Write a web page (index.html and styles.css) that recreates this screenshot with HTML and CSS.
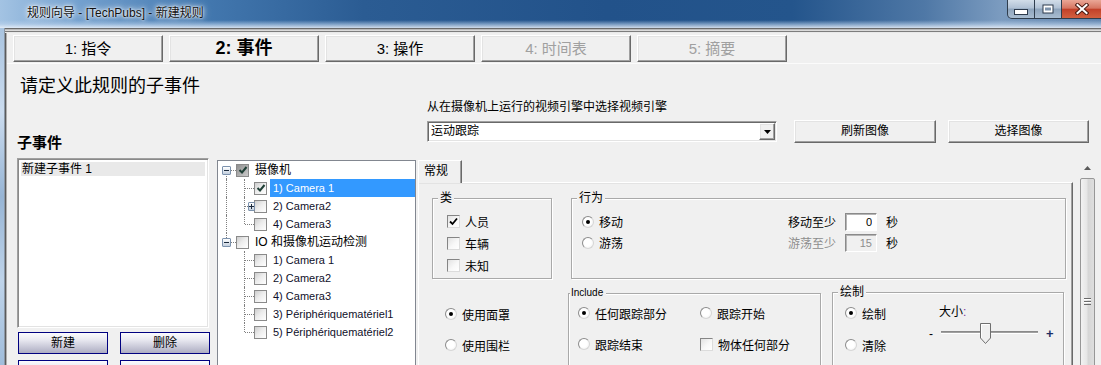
FILE: index.html
```html
<!DOCTYPE html>
<html lang="zh-CN">
<head>
<meta charset="utf-8">
<title>规则向导</title>
<link rel="stylesheet" href="styles.css">
</head>
<body>
<div class="window">
  <header class="titlebar">
    <span class="title">规则向导 - [TechPubs] - 新建规则</span>
    <div class="caption">
      <span class="cbtn cbtn-min"><svg width="14" height="6" viewBox="0 0 14 6"><rect x="0.5" y="0.5" width="13" height="5" fill="#fff" stroke="#2c3a4c"/></svg></span>
      <span class="cbtn cbtn-max"><svg width="12" height="10" viewBox="0 0 12 10"><rect x="0.5" y="0.5" width="11" height="9" fill="#2c3a4c"/><rect x="1.5" y="1.5" width="9" height="7" fill="#fff"/><rect x="3" y="3.5" width="6" height="3" fill="#7d93ac"/></svg></span>
      <span class="cbtn cbtn-close"><svg width="14" height="12" viewBox="0 0 14 12"><path d="M2.5 2 L11.5 10 M11.5 2 L2.5 10" stroke="#4a1a12" stroke-width="4" stroke-linecap="square"/><path d="M2.5 2 L11.5 10 M11.5 2 L2.5 10" stroke="#fff" stroke-width="2" stroke-linecap="square"/></svg></span>
    </div>
  </header>
  <div class="frame">
    <div class="frame-edge"></div>
    <div class="client">
      <div class="menu-edge"></div>
      <nav class="steps">
        <button class="btn3d step">1: 指令</button>
        <button class="btn3d step current">2: 事件</button>
        <button class="btn3d step">3: 操作</button>
        <button class="btn3d step" disabled>4: 时间表</button>
        <button class="btn3d step" disabled>5: 摘要</button>
      </nav>
      <main class="page">
        <h1 class="heading">请定义此规则的子事件</h1>
        <div class="cols">
          <section class="col-sub">
            <h2 class="sub-title">子事件</h2>
            <div class="listbox">
              <div class="list-item">新建子事件 1</div>
            </div>
            <div class="btn-row">
              <button class="navy-btn">新建</button>
              <button class="navy-btn wide">删除</button>
            </div>
            <div class="btn-row second">
              <button class="navy-btn"></button>
              <button class="navy-btn wide"></button>
            </div>
          </section>

          <section class="col-tree">
            <div class="tree">
              <div class="trow">
                <span class="cell v-down h"><span class="exp"></span></span>
                <span class="tcb mixed"><svg width="10" height="10" viewBox="0 0 10 10"><path d="M1.5 5 L4 7.5 L8.5 2" fill="none" stroke="#1f3f36" stroke-width="2"/></svg></span>
                <span class="tlabel cjk">摄像机</span>
              </div>
              <div class="trow">
                <span class="cell v-full"></span>
                <span class="cell v-full h"></span>
                <span class="tcb"><svg width="10" height="10" viewBox="0 0 10 10"><path d="M1.5 5 L4 7.5 L8.5 2" fill="none" stroke="#1f3f36" stroke-width="2"/></svg></span>
                <span class="tlabel sel">1) Camera 1</span>
              </div>
              <div class="trow">
                <span class="cell v-full"></span>
                <span class="cell v-full h"><span class="exp plus"></span></span>
                <span class="tcb"></span>
                <span class="tlabel">2) Camera2</span>
              </div>
              <div class="trow">
                <span class="cell v-full"></span>
                <span class="cell v-up h"></span>
                <span class="tcb"></span>
                <span class="tlabel">4) Camera3</span>
              </div>
              <div class="trow">
                <span class="cell v-up h"><span class="exp"></span></span>
                <span class="tcb"></span>
                <span class="tlabel cjk">IO 和摄像机运动检测</span>
              </div>
              <div class="trow">
                <span class="cell"></span>
                <span class="cell v-full h"></span>
                <span class="tcb"></span>
                <span class="tlabel">1) Camera 1</span>
              </div>
              <div class="trow">
                <span class="cell"></span>
                <span class="cell v-full h"></span>
                <span class="tcb"></span>
                <span class="tlabel">2) Camera2</span>
              </div>
              <div class="trow">
                <span class="cell"></span>
                <span class="cell v-full h"></span>
                <span class="tcb"></span>
                <span class="tlabel">4) Camera3</span>
              </div>
              <div class="trow">
                <span class="cell"></span>
                <span class="cell v-full h"></span>
                <span class="tcb"></span>
                <span class="tlabel">3) Périphériquematériel1</span>
              </div>
              <div class="trow">
                <span class="cell"></span>
                <span class="cell v-up h"></span>
                <span class="tcb"></span>
                <span class="tlabel">5) Périphériquematériel2</span>
              </div>
            </div>
          </section>

          <section class="col-main">
            <div class="engine-label">从在摄像机上运行的视频引擎中选择视频引擎</div>
            <div class="engine-row">
              <div class="combo">
                <span class="combo-text">运动跟踪</span>
                <span class="btn3d combo-arrow"><svg width="7" height="4" viewBox="0 0 7 4"><path d="M0 0 H7 L3.5 4 Z" fill="#000"/></svg></span>
              </div>
              <button class="btn3d act-btn refresh">刷新图像</button>
              <button class="btn3d act-btn select">选择图像</button>
            </div>

            <div class="tab-area">
              <div class="tabs">
                <div class="tabstrip"><span class="tab">常规</span></div>
                <div class="tabpanel">
                  <div class="row1">
                    <div class="group g-class">
                      <span class="gtitle">类</span>
                      <div class="opts">
                        <label class="opt"><span class="chk"><svg width="9" height="9" viewBox="0 0 9 9"><path d="M1 4.5 L3.5 7 L8 1.5" fill="none" stroke="#000" stroke-width="1.8"/></svg></span>人员</label>
                        <label class="opt"><span class="chk"></span>车辆</label>
                        <label class="opt"><span class="chk"></span>未知</label>
                      </div>
                    </div>
                    <div class="group g-behav">
                      <span class="gtitle">行为</span>
                      <div class="behav-body">
                        <div class="behav-radios">
                          <label class="opt r21"><span class="radio on"></span>移动</label>
                          <label class="opt r21"><span class="radio"></span>游荡</label>
                        </div>
                        <div class="behav-fields">
                          <div class="frow"><span class="flabel">移动至少</span><input class="num" value="0" readonly><span class="unit">秒</span></div>
                          <div class="frow"><span class="flabel dis">游荡至少</span><input class="num" value="15" disabled><span class="unit">秒</span></div>
                        </div>
                      </div>
                    </div>
                  </div>

                  <div class="row2">
                    <div class="mask-opts">
                      <label class="opt"><span class="radio on"></span>使用面罩</label>
                      <label class="opt"><span class="radio"></span>使用围栏</label>
                    </div>
                    <div class="group g-include">
                      <span class="gtitle small">Include</span>
                      <div class="inc-grid">
                        <label class="opt"><span class="radio on"></span>任何跟踪部分</label>
                        <label class="opt"><span class="radio"></span>跟踪开始</label>
                        <label class="opt"><span class="radio"></span>跟踪结束</label>
                        <label class="opt"><span class="chk"></span>物体任何部分</label>
                      </div>
                    </div>
                    <div class="group g-draw">
                      <span class="gtitle">绘制</span>
                      <div class="draw-body">
                        <div class="draw-radios">
                          <label class="opt"><span class="radio on"></span>绘制</label>
                          <label class="opt"><span class="radio"></span>清除</label>
                        </div>
                        <div class="size-box">
                          <div class="size-label">大小<span class="colon">:</span></div>
                          <div class="slider">
                            <span class="minus">-</span>
                            <span class="track">
                              <span class="track-line"></span>
                              <svg class="thumb" width="11" height="21" viewBox="0 0 11 21"><path d="M0.5 0.5 H10.5 V15 L5.5 20.5 L0.5 15 Z" fill="#f0f0f0" stroke="#6f6f6f"/><path d="M1.5 15 V1.5 H9.5" fill="none" stroke="#fff"/></svg>
                            </span>
                            <span class="plus">+</span>
                          </div>
                        </div>
                      </div>
                    </div>
                  </div>
                </div>
              </div>
              <div class="vscroll">
                <div class="up"><svg width="7" height="4" viewBox="0 0 7 4"><path d="M0 4 H7 L3.5 0 Z" fill="#5a5a5a"/></svg></div>
                <div class="thumb-bar"><span class="grip"></span></div>
              </div>
            </div>
          </section>
        </div>
      </main>
    </div>
  </div>
</div>
</body>
</html>
```

FILE: styles.css
```css
* { box-sizing: border-box; }
html, body { margin: 0; padding: 0; }
body {
  background: #f0f0f0;
  font-family: "Liberation Sans", "Noto Sans CJK SC", sans-serif;
  font-size: 12px;
  color: #000;
}
button, input { font-family: inherit; }

.window {
  width: 1101px;
  height: 365px;
  overflow: hidden;
  display: flex;
  flex-direction: column;
}

/* ---------- title bar ---------- */
.titlebar {
  height: 28px;
  flex: none;
  display: flex;
  align-items: flex-start;
  background:
    linear-gradient(to bottom, rgba(255,255,255,0) 0, rgba(255,255,255,0) 72%, rgba(190,212,236,.55) 86%, rgba(236,242,250,.85) 100%),
    linear-gradient(to right, #a3c3e3 0, #74a1cf 7%, #4479b0 18%, #2b5c93 33%, #22528a 55%, #24558c 72%, #4f78a6 84%, #7c9cc0 91%, #6286b0 100%);
}
.title {
  margin: 6px 0 0 27px;
  font-size: 12px;
  line-height: 14px;
  color: #111;
  text-shadow: 0 0 5px #fff, 0 0 9px rgba(255,255,255,.9), 0 0 2px #fff;
}
.caption { margin-left: auto; display: flex; }
.cbtn {
  height: 19px;
  display: flex;
  align-items: center;
  justify-content: center;
  border: 1px solid #2f3d4d;
  border-top: 0;
  border-left: 0;
}
.cbtn-min {
  width: 28px;
  border-left: 1px solid #2f3d4d;
  border-bottom-left-radius: 5px;
  padding-top: 6px;
  background: linear-gradient(#d2dde9, #b0c1d4 45%, #8ea4bc 50%, #a9bdd1 100%);
}
.cbtn-max {
  width: 27px;
  background: linear-gradient(#d2dde9, #b0c1d4 45%, #8ea4bc 50%, #a9bdd1 100%);
}
.cbtn-close {
  width: 39px;
  border-right: 0;
  background: linear-gradient(#eaa797, #d67662 45%, #c2412a 52%, #d2603f 100%);
}

/* ---------- frame ---------- */
.frame { flex: 1; display: flex; min-height: 0; }
.frame-edge {
  width: 4px;
  flex: none;
  background: linear-gradient(#a9c4e0, #cbdcef 25%, #97b5d5 50%, #bfd4ea 75%, #a0bddb);
}
.client {
  flex: 1;
  display: flex;
  flex-direction: column;
  border-left: 1px solid #8c98a6;
  padding-left: 2px;
  box-shadow: inset 1px 0 #5b5b5b, inset 2px 0 #b0b0b0;
}
.menu-edge {
  height: 5px;
  margin-left: -2px;
  flex: none;
  background: linear-gradient(#6b6b6b 0 1px, #b9b9b9 1px 2px, #dadada 2px 3px, #7d7d7d 3px 4px, #e9e9e9 4px 5px);
}

/* 3D classic button */
.btn3d {
  background: #f0f0f0;
  border: 1px solid;
  border-color: #fff #696969 #696969 #fff;
  box-shadow: inset -1px -1px #a0a0a0, inset 1px 1px #e3e3e3;
  padding: 0;
  color: #000;
}

/* ---------- wizard steps ---------- */
.steps {
  display: flex;
  gap: 6px;
  padding: 2px 0 0 6px;
  flex: none;
}
.step {
  width: 150px;
  height: 27px;
  font-size: 15px;
  line-height: 25px;
}
.step.current { font-size: 18px; font-weight: bold; }
.step:disabled { color: #a0a0a0; }

/* ---------- page ---------- */
.page {
  flex: 1;
  margin-top: 1px;
  border-top: 1px solid #fbfbfb;
  min-height: 0;
}
.heading {
  margin: 0;
  padding: 10px 0 0 13px;
  font-size: 18px;
  line-height: 24px;
  font-weight: normal;
}
.cols { display: flex; align-items: flex-start; }

/* left column */
.col-sub { width: 193px; margin-left: 10px; flex: none; }
.sub-title {
  margin: 36px 0 0;
  font-size: 15px;
  line-height: 18px;
  font-weight: bold;
}
.listbox {
  margin-top: 6px;
  width: 192px;
  height: 170px;
  background: #fff;
  border: 1px solid;
  border-color: #a0a0a0 #fff #fff #a0a0a0;
  box-shadow: inset 1px 1px #8a8a8a, inset -1px -1px #e3e3e3;
  padding: 3px;
}
.list-item {
  height: 14px;
  line-height: 14px;
  padding-left: 1px;
  background: #e9e9e9;
  font-size: 12px;
}
.btn-row { display: flex; gap: 12px; padding-left: 1px; margin-top: 4px; }
.btn-row.second { margin-top: 6px; }
.navy-btn {
  width: 90px;
  height: 22px;
  border: 1px solid #000080;
  background: linear-gradient(#fbfbfd, #e8e8f0 35%, #c4c4d4 75%, #acacc2);
  font-size: 12px;
  line-height: 20px;
  padding: 0;
  color: #000;
}
.navy-btn.wide { width: 90px; }

/* tree column */
.col-tree { margin: 62px 0 0 7px; flex: none; }
.tree {
  width: 199px;
  height: 220px;
  background: #fff;
  border: 1px solid #828790;
}
.trow { display: flex; align-items: center; height: 18px; }
.cell {
  width: 18px;
  height: 18px;
  flex: none;
  position: relative;
  display: flex;
  align-items: center;
  padding-left: 4px;
}
.cell::before, .cell::after { content: ""; position: absolute; }
.v-full::before { left: 8px; top: 0; bottom: 0; border-left: 1px dotted #7f7f7f; }
.v-down::before { left: 8px; top: 9px; bottom: 0; border-left: 1px dotted #7f7f7f; }
.v-up::before { left: 8px; top: 0; height: 9px; border-left: 1px dotted #7f7f7f; }
.h::after { left: 9px; right: 0; top: 9px; border-top: 1px dotted #7f7f7f; }
.exp {
  width: 9px;
  height: 9px;
  position: relative;
  z-index: 1;
  border: 1px solid #7c92ad;
  border-radius: 1px;
  background: linear-gradient(#ffffff, #e2e8f0 50%, #c3cfdd);
  display: grid;
  place-items: center;
}
.exp::before {
  content: "";
  grid-area: 1 / 1;
  width: 5px;
  height: 1px;
  background: #1b2a3c;
}
.exp.plus::after {
  content: "";
  grid-area: 1 / 1;
  width: 1px;
  height: 5px;
  background: #1b2a3c;
}
.tcb {
  width: 13px;
  height: 13px;
  flex: none;
  border: 1px solid #8a8a8a;
  background: linear-gradient(135deg, #cdcdcd, #ececec 45%, #fff);
  display: grid;
  place-items: center;
}
.tcb.mixed { background: linear-gradient(135deg, #8f8f8f, #adadad 50%, #c9c9c9); }
.tlabel {
  flex: 1;
  margin-left: 3px;
  padding-left: 3px;
  height: 18px;
  line-height: 18px;
  font-size: 11px;
  color: #10102a;
  white-space: nowrap;
}
.tlabel.cjk { font-size: 12px; color: #000; }
.tlabel.sel { background: #3399ff; color: #fff; }

/* main column */
.col-main { margin-left: 2px; width: 683px; flex: none; }
.engine-label {
  margin-top: 1px;
  padding-left: 9px;
  line-height: 16px;
  font-size: 12px;
}
.engine-row {
  display: flex;
  align-items: flex-start;
  margin-top: 5px;
  padding-left: 9px;
}
.combo {
  width: 350px;
  height: 21px;
  margin-top: 1px;
  display: flex;
  align-items: center;
  background: #fff;
  border: 1px solid;
  border-color: #a0a0a0 #fff #fff #a0a0a0;
  box-shadow: inset 1px 1px #696969, inset -1px -1px #e3e3e3;
  padding: 1px 1px 1px 2px;
}
.combo-text { flex: 1; line-height: 17px; font-size: 12px; padding-left: 1px; }
.combo-arrow {
  width: 16px;
  height: 17px;
  display: flex;
  align-items: center;
  justify-content: center;
}
.act-btn { height: 23px; font-size: 12px; line-height: 21px; }
.act-btn.refresh { width: 142px; margin-left: 17px; }
.act-btn.select { width: 141px; margin-left: 12px; }

/* tabs */
.tab-area { display: flex; margin-top: 17px; }
.tabs { width: 655px; height: 220px; display: flex; flex-direction: column; flex: none; }
.tabstrip { display: flex; height: 22px; flex: none; }
.tab {
  width: 44px;
  height: 23px;
  padding-left: 5px;
  line-height: 21px;
  font-size: 12px;
  background: #f0f0f0;
  border-top: 1px solid #fff;
  border-left: 1px solid #fff;
  border-right: 1px solid #696969;
  box-shadow: inset -1px 0 #a0a0a0;
  position: relative;
  z-index: 1;
}
.tabpanel {
  flex: 1;
  border-top: 1px solid #fff;
  border-left: 1px solid #fff;
  border-right: 1px solid #696969;
  box-shadow: inset -1px 0 #a0a0a0, inset 0 1px #e3e3e3;
}

/* group boxes */
.group {
  border: 1px solid #a9a9a9;
  box-shadow: inset 1px 1px #fff, 1px 1px #fff;
  flex: none;
}
.gtitle {
  display: block;
  width: max-content;
  margin: -8px 0 0 5px;
  padding: 0 2px;
  background: #f0f0f0;
  font-size: 12px;
  line-height: 14px;
}
.gtitle.small {
  margin: -7px 0 0 1px;
  padding: 0 3px 0 1px;
  font-size: 10px;
  line-height: 12px;
}

.opt {
  display: flex;
  align-items: center;
  gap: 5px;
  height: 22px;
  font-size: 12px;
  white-space: nowrap;
}
.opt.r21 { height: 21px; }

.chk {
  width: 13px;
  height: 13px;
  flex: none;
  border: 1px solid;
  border-color: #858585 #dcdcdc #dcdcdc #858585;
  background: linear-gradient(135deg, #e2e2e2, #f8f8f8 55%, #fff);
  display: grid;
  place-items: center;
}
.radio {
  width: 12px;
  height: 12px;
  flex: none;
  border-radius: 50%;
  border: 1px solid;
  border-color: #8c8c8c #d6d6d6 #d6d6d6 #8c8c8c;
  background: radial-gradient(circle at 45% 45%, #fff 0 45%, #ededed 90%);
  display: grid;
  place-items: center;
}
.radio.on::after {
  content: "";
  width: 4px;
  height: 4px;
  border-radius: 50%;
  background: #000;
}

.row1 { display: flex; gap: 19px; margin: 15px 0 0 13px; }
.g-class { width: 120px; height: 81px; }
.g-class .opts { padding: 5px 0 0 14px; }
.g-behav { width: 495px; height: 81px; }
.behav-body { display: flex; padding: 6px 0 0 10px; }
.behav-radios { width: 206px; }
.frow { display: flex; align-items: center; height: 21px; }
.flabel { width: 48px; font-size: 12px; }
.flabel.dis { color: #8d8d8d; }
.num {
  width: 32px;
  height: 18px;
  margin-left: 9px;
  padding: 0 4px 0 0;
  text-align: right;
  font-size: 11px;
  color: #000;
  background: #fff;
  border: 1px solid;
  border-color: #8a8a8a #fff #fff #8a8a8a;
  box-shadow: inset 1px 1px #b5b5b5;
  outline: none;
}
.num:disabled { background: #f0f0f0; color: #8d8d8d; }
.unit { margin-left: 9px; font-size: 12px; }

.row2 { display: flex; align-items: flex-start; margin: 13px 0 0 13px; }
.mask-opts {
  width: 136px;
  flex: none;
  display: flex;
  flex-direction: column;
  gap: 9px;
  padding: 11px 0 0 13px;
}
.g-include { width: 253px; height: 100px; margin-top: 1px; }
.inc-grid {
  display: grid;
  grid-template-columns: 122px auto;
  row-gap: 9px;
  padding: 3px 0 0 9px;
}
.g-draw { width: 232px; height: 100px; margin-left: 11px; }
.draw-body { display: flex; padding: 3px 0 0 12px; }
.draw-radios { width: 83px; display: flex; flex-direction: column; gap: 10px; }
.size-box { display: flex; flex-direction: column; }
.size-label { margin: 3px 0 0 11px; line-height: 14px; font-size: 12px; }
.colon { color: #7a3a9a; }
.slider { display: flex; align-items: center; height: 21px; margin-top: 4px; }
.minus { width: 6px; margin-left: 1px; font-size: 12px; line-height: 12px; }
.track { position: relative; width: 97px; height: 21px; margin-left: 6px; }
.track-line {
  display: block;
  margin-top: 8px;
  height: 3px;
  background: #a0a0a0;
  border-bottom: 1px solid #fff;
  border-top: 1px solid #8a8a8a;
}
.thumb { position: absolute; left: 39px; top: 0; }
.plus { margin-left: 8px; font-size: 13px; line-height: 12px; color: #1d2d64; font-weight: bold; }

/* scrollbar */
.vscroll {
  margin-left: 7px;
  width: 15px;
  height: 220px;
  flex: none;
  display: flex;
  flex-direction: column;
  background: #e9e9e9;
}
.up {
  height: 18px;
  flex: none;
  display: flex;
  justify-content: center;
  padding-top: 6px;
  background: #f0f0f0;
}
.thumb-bar {
  flex: 1;
  border: 1px solid #979797;
  border-radius: 2px;
  background: linear-gradient(to right, #f2f2f2, #e6e6e6 45%, #d6d6d6 55%, #dedede);
  display: flex;
  justify-content: center;
}
.grip {
  margin-top: 119px;
  width: 7px;
  height: 7px;
  background: repeating-linear-gradient(#6a6a6a 0 1px, #fff 1px 2px, transparent 2px 3px);
}
```
